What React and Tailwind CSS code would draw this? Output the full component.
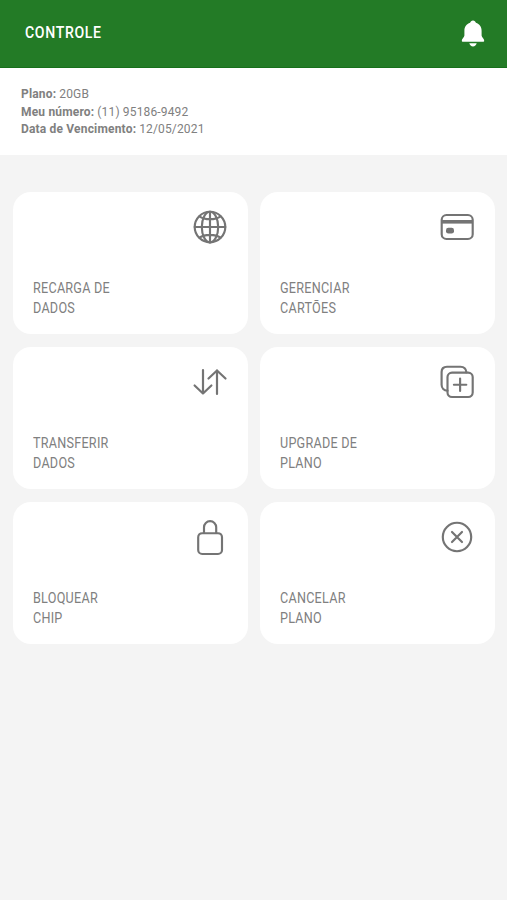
import React from "react";

function Icon({ children }) {
  return (
    <svg
      className="h-10 w-10 self-end text-[#747474]"
      viewBox="0 0 40 40"
      fill="none"
      stroke="currentColor"
      strokeWidth="2.15"
      strokeLinecap="round"
      strokeLinejoin="round"
    >
      {children}
    </svg>
  );
}

const globe = (
  <Icon>
    <circle cx="20" cy="20" r="15.3" />
    <ellipse cx="20" cy="20" rx="8.2" ry="15.3" />
    <path d="M20 4.7v30.6M4.7 20h30.6M9.5 9.3c5 3.8 16 3.8 21 0M9.5 30.7c5-3.8 16-3.8 21 0" />
  </Icon>
);

const card = (
  <Icon>
    <rect x="4.7" y="8" width="31" height="24" rx="4.8" />
    <path d="M5 14.8h30.5" strokeWidth="3.6" strokeLinecap="butt" />
    <rect x="9" y="20.8" width="8" height="5.8" rx="2.4" fill="currentColor" stroke="none" />
  </Icon>
);

const transfer = (
  <Icon>
    <path d="M13 8v23.5M4.6 23.5l8.4 8 8.4-8M27 32V8.3M18.5 16.5l8.5-8 8.5 8" strokeWidth="2.2" />
  </Icon>
);

const duplicate = (
  <Icon>
    <rect x="10.5" y="10.6" width="25.2" height="24.4" rx="4.5" />
    <path d="M10.500 28.800C7 28.600 4.600 26 4.600 22.800V10c0-3.300 2.200-5.300 5.400-5.300h13.500c3.300 0 5.600 2.200 5.900 5.600M23.100 16.500v12.400M16.900 22.700h12.400" />
  </Icon>
);

const lock = (
  <Icon>
    <rect x="8.2" y="16.2" width="23.8" height="20.8" rx="4" />
    <path d="M14 16v-5.8a6.1 6.1 0 0 1 12.2 0V16" />
  </Icon>
);

const cancel = (
  <Icon>
    <circle cx="20" cy="20" r="14.2" />
    <path d="M15 15l10 10M25 15l-10 10" />
  </Icon>
);

const items = [
  { icon: globe, lines: ["RECARGA DE", "DADOS"] },
  { icon: card, lines: ["GERENCIAR", "CARTÕES"] },
  { icon: transfer, lines: ["TRANSFERIR", "DADOS"] },
  { icon: duplicate, lines: ["UPGRADE DE", "PLANO"] },
  { icon: lock, lines: ["BLOQUEAR", "CHIP"] },
  { icon: cancel, lines: ["CANCELAR", "PLANO"] },
];

function Info({ label, value }) {
  return (
    <p>
      <span className="font-bold tracking-[0.18px]">{label}</span>{" "}
      <span className="tracking-[0.15px]">{value}</span>
    </p>
  );
}

export default function App() {
  return (
    <div className="h-[900px] w-[507px] overflow-hidden bg-[#f4f4f4] font-['Roboto',sans-serif]">
      <header className="flex h-[68px] items-start justify-between border-b border-[#17701b] bg-[#237b26] pl-[25px] pr-[22px] text-white">
        <h1 className="mt-[22.5px] origin-left scale-x-[0.88] text-[16px] font-medium leading-5 tracking-[0.75px]">
          CONTROLE
        </h1>
        <svg className="mt-5 h-[27px] w-6" viewBox="0 0 24 27" fill="currentColor">
          <path d="M12 .4c-1.5 0-2.6 1-2.9 2.3C5.5 3.8 3.4 6.8 3.4 10.7v4.8c0 2-2.6 3.2-2.6 5.2 0 .7.5 1 1.2 1h20c.7 0 1.2-.3 1.2-1 0-2-2.6-3.2-2.6-5.2v-4.8c0-3.900-2.100-6.900-5.700-8C14.600 1.400 13.500.400 12 .400Z" />
          <path d="M8.3 23.2h7.4c-.5 2-1.9 3.2-3.7 3.2s-3.2-1.2-3.7-3.2Z" />
        </svg>
      </header>
      <section className="h-[87px] bg-white pl-[21px] pt-[18px] text-[12px] leading-[17.5px] text-[#808080]">
        <Info label="Plano:" value="20GB" />
        <Info label="Meu número:" value="(11) 95186-9492" />
        <Info label="Data de Vencimento:" value="12/05/2021" />
      </section>
      <main className="grid grid-cols-[235px_235px] gap-x-[12.4px] gap-y-[13.5px] pl-[13px] pt-[37.4px]">
        {items.map(({ icon, lines }, i) => (
          <button
            key={i}
            className="flex h-[141.5px] flex-col rounded-[18px] bg-white pb-[15px] pl-5 pr-[18px] pt-[14.5px] text-left"
          >
            {icon}
            <span className="mt-auto origin-left scale-x-[0.9] text-[14px] leading-[20.4px] tracking-[0.28px] text-[#808080]">
              {lines[0]}
              <br />
              {lines[1]}
            </span>
          </button>
        ))}
      </main>
    </div>
  );
}
